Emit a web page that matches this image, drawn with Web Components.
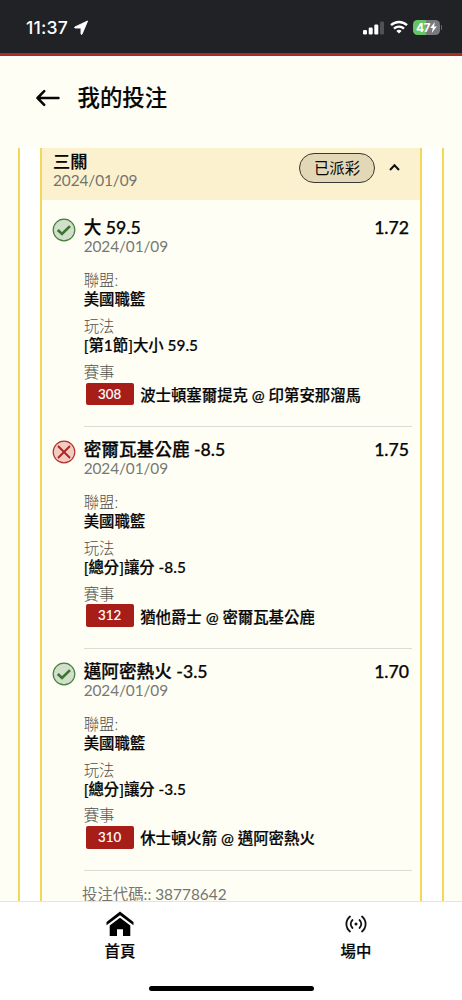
<!DOCTYPE html>
<html lang="zh-Hant">
<head>
<meta charset="utf-8">
<title>我的投注</title>
<style>
html,body{margin:0;height:100%;background:#fffef5}
body{font-family:Lato,"Noto Sans CJK TC",sans-serif;color:#060606;overflow:hidden}
</style>
</head>
<body>
<bet-app></bet-app>
<script>
const define = (name, html) => customElements.define(name, class extends HTMLElement {
  constructor() {
    super();
    const t = document.createElement('template');
    t.innerHTML = html;
    this.attachShadow({ mode: 'open' }).appendChild(t.content.cloneNode(true));
    const mark = this.shadowRoot.querySelector('result-mark');
    if (mark) mark.setAttribute('kind', this.getAttribute('kind') || 'win');
  }
});

define('status-bar', `<style>
:host{display:flex;box-sizing:border-box;height:56px;flex:none;background:#212226;border-bottom:3px solid #a82c25;padding:0 20px 0 26px;align-items:center;font-family:Inter,sans-serif;color:#fff}
.t{font-size:17.600px;font-weight:500;letter-spacing:.2px;line-height:20px;margin-top:2px;width:43px;white-space:nowrap}
svg{display:block}
.loc{margin:2px 0 0 5px}
.sig{margin:2px 6px 0 auto}
.wifi{margin:1px 5px 0 0}
.bat{display:flex;align-items:center;justify-content:center;box-sizing:border-box;width:27px;height:15px;border-radius:4.500px;background:linear-gradient(90deg,#65c466 48%,#77797b 48%);margin-top:2px;font:700 12px/15px Inter,sans-serif;letter-spacing:-.5px;padding-left:1px}
.cap{width:1.500px;height:5px;border-radius:0 2px 2px 0;background:#66686b;margin:2px 0 0 1px}
</style>
<span class="t">11:37</span>
<svg class="loc" width="15" height="15" viewBox="0 0 15 15"><path d="M13.600 1 1 6.900c-.7.4-.5 1.100.2 1.100H7v5.800c0 .8.8.9 1.100.2Z" fill="#fff" stroke="#fff" stroke-width=".9" stroke-linejoin="round"/></svg>
<svg class="sig" width="21" height="14" viewBox="0 0 21 14"><g fill="#fff"><rect y="9" width="4" height="4.500" rx="1.200"/><rect x="5.700" y="6.500" width="4" height="7" rx="1.200"/><rect x="11.300" y="3.500" width="4" height="10" rx="1.200"/></g><rect x="17" y=".5" width="4" height="13" rx="1.200" fill="#505155"/></svg>
<svg class="wifi" width="18" height="14" viewBox="0 0 18 14" fill="none" stroke="#fff" stroke-width="2.400"><path d="M1 5.200a11.500 11.500 0 0 1 16 0M4 8.600a7.200 7.200 0 0 1 10 0"/><path d="M9 13.600 6.400 11a3.800 3.800 0 0 1 5.200 0Z" fill="#fff" stroke="none"/></svg>
<span class="bat">47<svg width="7" height="11" viewBox="0 0 7 11"><path d="M4.800 0 .2 6h2.600L1.800 11 6.800 4.600H4.100Z" fill="#fff"/></svg></span><span class="cap"></span>`);

define('page-title', `<style>
:host{display:flex;box-sizing:border-box;height:92px;flex:none;padding:0 0 9px 36px;align-items:center;font-size:22.400px;line-height:30px;font-weight:500;-webkit-text-stroke:.15px}
svg{margin-right:17.500px;flex:none}
</style>
<svg width="24" height="18" viewBox="0 0 24 18" fill="none" stroke="#060606" stroke-width="2.500" stroke-linecap="round" stroke-linejoin="round"><path d="M22.500 9H1.500M8.200 2.200 1.500 9l6.700 6.800"/></svg><slot></slot>`);

define('slip-head', `<style>
:host{display:flex;height:52px;flex:none;background:#fcf1cf;box-sizing:border-box;padding:3px 20px 0 11px}
.l{flex:1}
.n{font-size:17.200px;line-height:21px;font-weight:500;-webkit-text-stroke:.2px}
.d{font-size:15.400px;line-height:17px;letter-spacing:-.1px;color:#747370}
.p{box-sizing:border-box;width:76px;height:30px;border:1.200px solid #3a3732;border-radius:15px;background:#e3d8b6;text-align:center;font-size:15.400px;line-height:29px;margin-top:2px}
svg{margin:12px 0 0 14px}
</style>
<div class="l"><div class="n"><slot></slot></div><div class="d"><slot name="date"></slot></div></div>
<div class="p"><slot name="state"></slot></div>
<svg width="11" height="9" viewBox="0 0 11 9" fill="none" stroke="#111" stroke-width="2"><path d="M1 7 5.500 2.200 10 7"/></svg>`);

define('result-mark', `<style>
:host{display:block;width:24px;height:24px}
svg{display:none}
:host([kind=win]) .w,:host([kind=lose]) .x{display:block}
</style>
<svg class="w" width="24" height="24" viewBox="0 0 24 24" fill="none"><circle cx="12" cy="12" r="10.800" fill="#d2e0cb" stroke="#437f3d" stroke-width="1.200"/><path d="m5.800 12 4.200 3.900 8-7.800" stroke="#397630" stroke-width="2.700"/></svg>
<svg class="x" width="24" height="24" viewBox="0 0 24 24" fill="none"><circle cx="12" cy="12" r="10.800" fill="#f2cbc4" stroke="#b3312b" stroke-width="1.200"/><path d="m6 6 12 12M18 6 6 18" stroke="#ad241e" stroke-width="1.900"/></svg>`);

define('settled-leg', `<style>
:host{display:grid;grid-template-columns:32.200px 1fr;height:221.800px;box-sizing:border-box;padding:10px 8.500px 0 9.500px}
result-mark{margin-top:3px}
.b{border-bottom:1px solid #dddcd6;box-sizing:border-box;height:211.800px;font-weight:500}
.top{display:flex;justify-content:space-between;padding-right:2.500px;font-size:17.650px;line-height:25px;height:24px;-webkit-text-stroke:.25px}
.d{font-size:15.400px;line-height:17px;letter-spacing:-.1px;font-weight:400;color:#787873;height:25px;margin-top:-1px}
.k,.v{font-size:15.400px;white-space:nowrap}
.k{font-weight:300;color:#50504c;line-height:21px;height:19px;margin-top:6.900px}
.v{-webkit-text-stroke:.2px;line-height:20px;height:20px}
.m{display:flex;align-items:center;margin:1px 0 0 2px;height:24px;font-size:15.400px;white-space:nowrap;-webkit-text-stroke:.2px}
.no{width:48px;height:22.500px;line-height:22px;border-radius:2px;background:#a61e17;color:#fff;text-align:center;font-size:13.300px;font-weight:500;margin-right:6.500px;-webkit-text-stroke:.1px}
</style>
<result-mark></result-mark>
<div class="b">
<div class="top"><span><slot></slot></span><span><slot name="odds"></slot></span></div>
<div class="d"><slot name="date"></slot></div>
<div class="k">聯盟:</div><div class="v"><slot name="league"></slot></div>
<div class="k">玩法</div><div class="v"><slot name="play"></slot></div>
<div class="k">賽事</div>
<div class="m"><span class="no"><slot name="no"></slot></span><slot name="match"></slot></div>
</div>`);

define('slip-frame', `<style>
:host{display:block;flex:1;min-height:0;overflow:hidden;padding:0 18px}
.o{box-sizing:border-box;height:100%;border:solid #f2d859;border-width:0 2px;background:#fff;padding:0 20px}
.i{box-sizing:border-box;height:100%;border:solid #f2d859;border-width:0 2px;background:#fffef5;display:flex;flex-direction:column}
::slotted(settled-leg){flex:none}
::slotted([slot=code]){display:block;flex:none;margin:13.500px 0 0 40px;font-size:15.400px;line-height:20px;height:18px;color:#767672}
.s{height:5.200px;flex:none}
</style><div class="o"><div class="i"><slot name="head"></slot><div class="s"></div><slot></slot><slot name="code"></slot></div></div>`);

define('nav-item', `<style>
:host{display:flex;flex:1;flex-direction:column;align-items:center;font-size:15.400px;line-height:22px;font-weight:500;-webkit-text-stroke:.2px}
.i{height:29px;display:flex;align-items:center;justify-content:center;margin:7px 0 2px}
</style><div class="i"><slot name="icon"></slot></div><div><slot></slot></div>`);

define('tab-bar', `<style>
:host{display:flex;flex-direction:column;height:99px;flex:none;box-sizing:border-box;border-top:1px solid #e4e4e1;background:#fff}
.r{display:flex;height:83px;width:472px;margin-left:2px}
.h{width:165px;height:5.500px;border-radius:3px;background:#000;margin:.5px auto 0 148.500px}
</style><div class="r"><slot></slot></div><div class="h"></div>`);

define('bet-app', `<style>
:host{display:flex;flex-direction:column;width:462px;height:1000px;overflow:hidden;background:#fffef5}
svg{display:block}
</style>
<status-bar></status-bar>
<page-title>我的投注</page-title>
<slip-frame>
<slip-head slot="head">三關<span slot="date">2024/01/09</span><span slot="state">已派彩</span></slip-head>
<settled-leg kind="win">大 59.5<span slot="odds">1.72</span><span slot="date">2024/01/09</span><span slot="league">美國職籃</span><span slot="play">[第1節]大小 59.5</span><span slot="no">308</span><span slot="match">波士頓塞爾提克 @ 印第安那溜馬</span></settled-leg>
<settled-leg kind="lose">密爾瓦基公鹿 -8.5<span slot="odds">1.75</span><span slot="date">2024/01/09</span><span slot="league">美國職籃</span><span slot="play">[總分]讓分 -8.5</span><span slot="no">312</span><span slot="match">猶他爵士 @ 密爾瓦基公鹿</span></settled-leg>
<settled-leg kind="win">邁阿密熱火 -3.5<span slot="odds">1.70</span><span slot="date">2024/01/09</span><span slot="league">美國職籃</span><span slot="play">[總分]讓分 -3.5</span><span slot="no">310</span><span slot="match">休士頓火箭 @ 邁阿密熱火</span></settled-leg>
<span slot="code">投注代碼:: 38778642</span>
</slip-frame>
<tab-bar>
<nav-item><svg slot="icon" width="28" height="26" viewBox="0 0 28 26"><path d="M14 .5.500 11v3.300L14 4.200l13.500 10.100V11Z"/><path d="M14 6.800 3.700 14.500V25H11v-6.800h6V25h7.300V14.500Z"/></svg>首頁</nav-item>
<nav-item><svg slot="icon" width="22" height="18" viewBox="0 0 22 18" fill="none" stroke="#111" stroke-width="1.800" stroke-linecap="round"><path d="M5 1.500C.2 5.500.2 12.500 5 16.500M17 1.500c4.800 4 4.800 11 0 15M7.500 5c-2.400 2.300-2.400 5.700 0 8M14.500 5c2.400 2.300 2.400 5.700 0 8"/><circle cx="11" cy="9" r="1.500" fill="#111" stroke="none"/></svg>場中</nav-item>
</tab-bar>`);
</script>
</body>
</html>
